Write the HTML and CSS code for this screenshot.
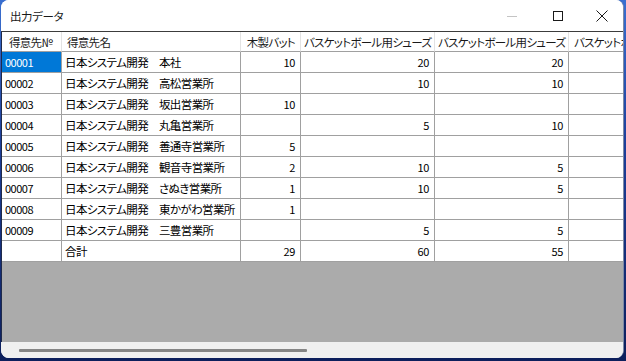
FILE: index.html
```html
<!DOCTYPE html>
<html lang="ja">
<head>
<meta charset="utf-8">
<title>出力データ</title>
<link rel="stylesheet" href="styles.css">
</head>
<body>
<div class="window">
  <div class="titlebar">
    <span class="title">出力データ</span>
    <div class="controls">
      <span class="btn btn-min"><svg width="12" height="12" viewBox="0 0 12 12"><path d="M1 6.5H11" stroke="#c4c4c4" stroke-width="1"/></svg></span>
      <span class="btn btn-max"><svg width="12" height="12" viewBox="0 0 12 12"><rect x="1.5" y="1.5" width="9" height="9" fill="none" stroke="#1a1a1a" stroke-width="1"/></svg></span>
      <span class="btn btn-close"><svg width="14" height="14" viewBox="0 0 14 14"><path d="M1.5 1.5L12.5 12.5M12.5 1.5L1.5 12.5" stroke="#1a1a1a" stroke-width="1"/></svg></span>
    </div>
  </div>
  <div class="grid-area">
    <div class="grid">
      <div class="h h-left h1">得意先№</div>
      <div class="h h-left">得意先名</div>
      <div class="h h-right">木製バット</div>
      <div class="h h-fill">バスケットボール用シューズ</div>
      <div class="h h-fill">バスケットボール用シューズ</div>
      <div class="h h-fill h-last">バスケットボール用シューズ</div>

      <div class="c code sel">00001</div><div class="c">日本システム開発　本社</div><div class="c n">10</div><div class="c n">20</div><div class="c n">20</div><div class="c n"></div>
      <div class="c code">00002</div><div class="c">日本システム開発　高松営業所</div><div class="c n"></div><div class="c n">10</div><div class="c n">10</div><div class="c n"></div>
      <div class="c code">00003</div><div class="c">日本システム開発　坂出営業所</div><div class="c n">10</div><div class="c n"></div><div class="c n"></div><div class="c n"></div>
      <div class="c code">00004</div><div class="c">日本システム開発　丸亀営業所</div><div class="c n"></div><div class="c n">5</div><div class="c n">10</div><div class="c n"></div>
      <div class="c code">00005</div><div class="c">日本システム開発　善通寺営業所</div><div class="c n">5</div><div class="c n"></div><div class="c n"></div><div class="c n"></div>
      <div class="c code">00006</div><div class="c">日本システム開発　観音寺営業所</div><div class="c n">2</div><div class="c n">10</div><div class="c n">5</div><div class="c n"></div>
      <div class="c code">00007</div><div class="c">日本システム開発　さぬき営業所</div><div class="c n">1</div><div class="c n">10</div><div class="c n">5</div><div class="c n"></div>
      <div class="c code">00008</div><div class="c">日本システム開発　東かがわ営業所</div><div class="c n">1</div><div class="c n"></div><div class="c n"></div><div class="c n"></div>
      <div class="c code">00009</div><div class="c">日本システム開発　三豊営業所</div><div class="c n"></div><div class="c n">5</div><div class="c n">5</div><div class="c n"></div>
      <div class="c code"></div><div class="c">合計</div><div class="c n">29</div><div class="c n">60</div><div class="c n">55</div><div class="c n"></div>
    </div>
  </div>
  <div class="hscroll"><div class="thumb"></div></div>
</div>
</body>
</html>
```
FILE: styles.css
```css
html, body {
  margin: 0;
  padding: 0;
}
body {
  width: 626px;
  height: 361px;
  overflow: hidden;
  background: linear-gradient(180deg, #3a6fd0 0%, #1d3f9a 40%, #0d1f5c 100%);
  font-family: "Noto Sans CJK JP", "Noto Sans", sans-serif;
  font-feature-settings: "palt";
}
.window {
  margin-left: 1px;
  width: 623px;
  height: 358px;
  background: #ffffff;
  border-radius: 8px;
  overflow: hidden;
  display: flex;
  flex-direction: column;
  box-sizing: border-box;
  border-right: 1px solid #7d8aa6;
}
.titlebar {
  height: 31px;
  flex: none;
  display: flex;
  align-items: center;
  justify-content: space-between;
  background: #ffffff;
}
.title {
  margin-left: 9px;
  font-size: 11.5px;
  letter-spacing: -0.4px;
  color: #1a1a1a;
  line-height: 14px;
  margin-top: 1px;
}
.controls {
  display: flex;
  align-items: center;
  margin-right: 14px;
}
.btn {
  display: flex;
  align-items: center;
  justify-content: center;
}
.btn-min { width: 12px; margin-right: 34px; }
.btn-max { width: 12px; margin-right: 31px; }
.btn-close { width: 14px; }
.grid-area {
  flex: 1;
  background: #ababab;
  border-top: 1px solid #3c3c3c;
  border-left: 1px solid #1f2a4a;
  overflow: hidden;
}
.grid {
  display: grid;
  grid-template-columns: 60px 179px 60px 134px 134px 134px;
  grid-template-rows: 20px repeat(10, 21px);
  width: 701px;
}
.h {
  box-sizing: border-box;
  background: #ffffff;
  border-right: 1px solid #e3e3e3;
  border-bottom: 1px solid #a0a0a0;
  font-size: 11.5px;
  letter-spacing: -0.7px;
  color: #1a1a1a;
  display: flex;
  align-items: center;
  white-space: nowrap;
  overflow: hidden;
  line-height: 14px;
}
.h-left { padding-left: 5px; }
.h1 { padding-left: 7px; }
.h-right { justify-content: flex-end; padding-right: 5px; }
.h-fill { padding-left: 3px; }
.h-last { padding-left: 5px; }
.c {
  box-sizing: border-box;
  background: #ffffff;
  border-right: 1px solid #a0a0a0;
  border-bottom: 1px solid #a0a0a0;
  font-size: 11.5px;
  letter-spacing: -0.6px;
  color: #000000;
  display: flex;
  align-items: center;
  padding-left: 3px;
  white-space: nowrap;
  overflow: hidden;
  line-height: 14px;
}
.code {
  font-size: 11px;
  letter-spacing: -0.5px;
}
.n {
  justify-content: flex-end;
  padding-left: 0;
  padding-right: 5px;
  font-size: 11px;
  letter-spacing: -0.3px;
}
.sel {
  background: #0078d7;
  color: #ffffff;
}
.hscroll {
  height: 16px;
  flex: none;
  background: #f0f0f0;
  padding-top: 7px;
  box-sizing: border-box;
}
.thumb {
  margin-left: 18px;
  width: 288px;
  height: 3px;
  border-radius: 1px;
  background: #858585;
}
```
